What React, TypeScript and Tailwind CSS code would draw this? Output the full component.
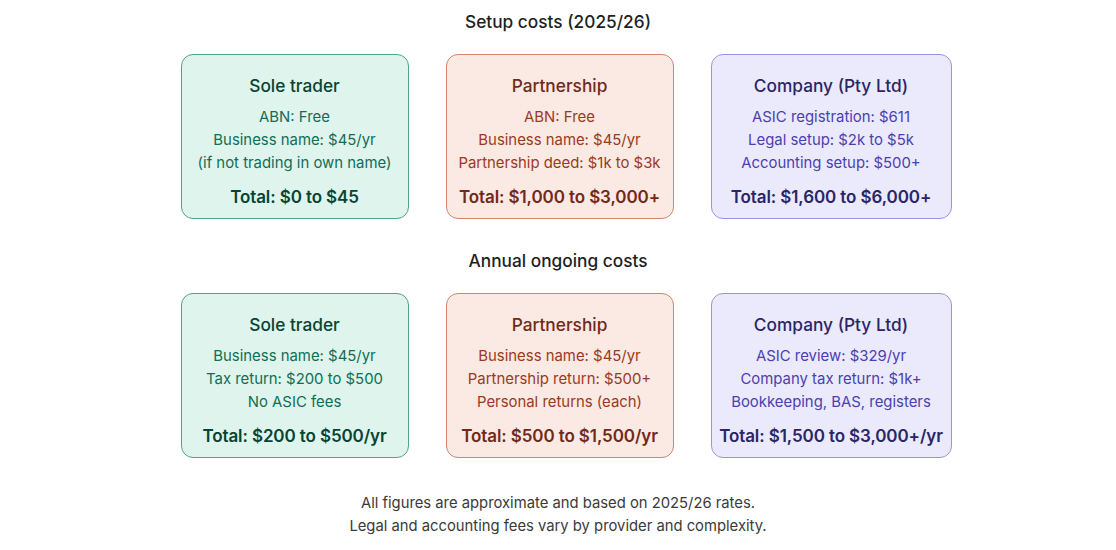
import React from 'react';

type Card = {
  title: string;
  lines: string[];
  total: string;
  tone: 'green' | 'coral' | 'purple';
  wide?: boolean;
};

const tones = {
  green: {
    box: 'bg-[#dff4ec] border-[#4fa585]',
    title: 'text-[#064434]',
    body: 'text-[#0f6e56]',
  },
  coral: {
    box: 'bg-[#fbe9e3] border-[#cf8673]',
    title: 'text-[#71291a]',
    body: 'text-[#9b3a22]',
  },
  purple: {
    box: 'bg-[#ebeafc] border-[#9a94e0]',
    title: 'text-[#2a2566]',
    body: 'text-[#4a40b0]',
  },
};

const setup: Card[] = [
  { title: 'Sole trader', tone: 'green', lines: ['ABN: Free', 'Business name: $45/yr', '(if not trading in own name)'], total: 'Total: $0 to $45' },
  { title: 'Partnership', tone: 'coral', lines: ['ABN: Free', 'Business name: $45/yr', 'Partnership deed: $1k to $3k'], total: 'Total: $1,000 to $3,000+' },
  { title: 'Company (Pty Ltd)', tone: 'purple', wide: true, lines: ['ASIC registration: $611', 'Legal setup: $2k to $5k', 'Accounting setup: $500+'], total: 'Total: $1,600 to $6,000+' },
];

const annual: Card[] = [
  { title: 'Sole trader', tone: 'green', lines: ['Business name: $45/yr', 'Tax return: $200 to $500', 'No ASIC fees'], total: 'Total: $200 to $500/yr' },
  { title: 'Partnership', tone: 'coral', lines: ['Business name: $45/yr', 'Partnership return: $500+', 'Personal returns (each)'], total: 'Total: $500 to $1,500/yr' },
  { title: 'Company (Pty Ltd)', tone: 'purple', wide: true, lines: ['ASIC review: $329/yr', 'Company tax return: $1k+', 'Bookkeeping, BAS, registers'], total: 'Total: $1,500 to $3,000+/yr' },
];

const CostCard: React.FC<{ card: Card }> = ({ card }) => {
  const t = tones[card.tone];
  return (
    <div className={`${card.wide ? 'w-[241px] -mr-[13px]' : 'w-[228px]'} h-[165px] rounded-xl border flex flex-col items-center pt-[20px] whitespace-nowrap ${t.box}`}>
      <div className={`text-[17.3px] leading-[22px] font-medium ${t.title}`}>{card.title}</div>
      <div className={`mt-[9px] text-[14.9px] leading-[23px] text-center ${t.body}`}>
        {card.lines.map((l) => (
          <div key={l}>{l}</div>
        ))}
      </div>
      <div className={`mt-[10px] text-[17px] leading-[24px] font-semibold tracking-[-0.1px] ${t.title}`}>{card.total}</div>
    </div>
  );
};

const Row: React.FC<{ heading: string; cards: Card[] }> = ({ heading, cards }) => (
  <div className="flex flex-col items-center">
    <h2 className="text-[17.3px] leading-[22px] font-medium text-[#1f1f1f]">{heading}</h2>
    <div className="mt-[21px] flex gap-[37px] pl-[3px]">
      {cards.map((c) => (
        <CostCard key={c.title} card={c} />
      ))}
    </div>
  </div>
);

export default function App() {
  return (
    <div className="w-[1116px] h-[550px] bg-white pt-[11px] font-['Inter',sans-serif]">
      <div className="flex flex-col items-center gap-[31px]">
        <Row heading="Setup costs (2025/26)" cards={setup} />
        <Row heading="Annual ongoing costs" cards={annual} />
      </div>
      <div className="mt-[34px] text-center text-[14.8px] leading-[23px] text-[#3a3a3a]">
        <div>All figures are approximate and based on 2025/26 rates.</div>
        <div>Legal and accounting fees vary by provider and complexity.</div>
      </div>
    </div>
  );
}
